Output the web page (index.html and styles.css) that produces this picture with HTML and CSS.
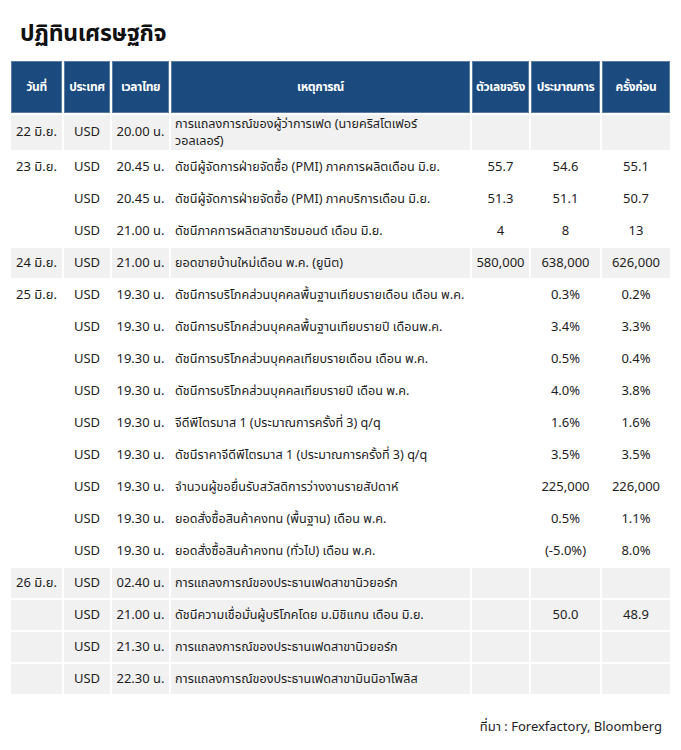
FILE: index.html
```html
<!DOCTYPE html>
<html lang="th">
<head>
<meta charset="utf-8">
<title>ปฏิทินเศรษฐกิจ</title>
<link rel="stylesheet" href="styles.css">
</head>
<body>
<div class="page">
  <h1 class="title">ปฏิทินเศรษฐกิจ</h1>
  <table class="cal">
    <colgroup>
      <col class="c-date"><col class="c-cur"><col class="c-time"><col class="c-event"><col class="c-act"><col class="c-fc"><col class="c-prev">
    </colgroup>
    <thead>
      <tr>
        <th>วันที่</th><th>ประเทศ</th><th>เวลาไทย</th><th>เหตุการณ์</th><th>ตัวเลขจริง</th><th>ประมาณการ</th><th>ครั้งก่อน</th>
      </tr>
    </thead>
    <tbody>
      <tr class="shade two">
        <td class="date">22 มิ.ย.</td><td class="cur">USD</td><td class="time">20.00 น.</td><td class="event">การแถลงการณ์ของผู้ว่าการเฟด (นายคริสโตเฟอร์<br>วอลเลอร์)</td><td class="num"></td><td class="num"></td><td class="num"></td>
      </tr>
      <tr>
        <td class="date">23 มิ.ย.</td><td class="cur">USD</td><td class="time">20.45 น.</td><td class="event">ดัชนีผู้จัดการฝ่ายจัดซื้อ (PMI) ภาคการผลิตเดือน มิ.ย.</td><td class="num">55.7</td><td class="num">54.6</td><td class="num">55.1</td>
      </tr>
      <tr>
        <td class="date"></td><td class="cur">USD</td><td class="time">20.45 น.</td><td class="event">ดัชนีผู้จัดการฝ่ายจัดซื้อ (PMI) ภาคบริการเดือน มิ.ย.</td><td class="num">51.3</td><td class="num">51.1</td><td class="num">50.7</td>
      </tr>
      <tr>
        <td class="date"></td><td class="cur">USD</td><td class="time">21.00 น.</td><td class="event">ดัชนีภาคการผลิตสาขาริชมอนด์ เดือน มิ.ย.</td><td class="num">4</td><td class="num">8</td><td class="num">13</td>
      </tr>
      <tr class="shade">
        <td class="date">24 มิ.ย.</td><td class="cur">USD</td><td class="time">21.00 น.</td><td class="event">ยอดขายบ้านใหม่เดือน พ.ค. (ยูนิต)</td><td class="num">580,000</td><td class="num">638,000</td><td class="num">626,000</td>
      </tr>
      <tr>
        <td class="date">25 มิ.ย.</td><td class="cur">USD</td><td class="time">19.30 น.</td><td class="event">ดัชนีการบริโภคส่วนบุคคลพื้นฐานเทียบรายเดือน เดือน พ.ค.</td><td class="num"></td><td class="num">0.3%</td><td class="num">0.2%</td>
      </tr>
      <tr>
        <td class="date"></td><td class="cur">USD</td><td class="time">19.30 น.</td><td class="event">ดัชนีการบริโภคส่วนบุคคลพื้นฐานเทียบรายปี เดือนพ.ค.</td><td class="num"></td><td class="num">3.4%</td><td class="num">3.3%</td>
      </tr>
      <tr>
        <td class="date"></td><td class="cur">USD</td><td class="time">19.30 น.</td><td class="event">ดัชนีการบริโภคส่วนบุคคลเทียบรายเดือน เดือน พ.ค.</td><td class="num"></td><td class="num">0.5%</td><td class="num">0.4%</td>
      </tr>
      <tr>
        <td class="date"></td><td class="cur">USD</td><td class="time">19.30 น.</td><td class="event">ดัชนีการบริโภคส่วนบุคคลเทียบรายปี เดือน พ.ค.</td><td class="num"></td><td class="num">4.0%</td><td class="num">3.8%</td>
      </tr>
      <tr>
        <td class="date"></td><td class="cur">USD</td><td class="time">19.30 น.</td><td class="event">จีดีพีไตรมาส 1 (ประมาณการครั้งที่ 3) q/q</td><td class="num"></td><td class="num">1.6%</td><td class="num">1.6%</td>
      </tr>
      <tr>
        <td class="date"></td><td class="cur">USD</td><td class="time">19.30 น.</td><td class="event">ดัชนีราคาจีดีพีไตรมาส 1 (ประมาณการครั้งที่ 3) q/q</td><td class="num"></td><td class="num">3.5%</td><td class="num">3.5%</td>
      </tr>
      <tr>
        <td class="date"></td><td class="cur">USD</td><td class="time">19.30 น.</td><td class="event">จำนวนผู้ขอยื่นรับสวัสดิการว่างงานรายสัปดาห์</td><td class="num"></td><td class="num">225,000</td><td class="num">226,000</td>
      </tr>
      <tr>
        <td class="date"></td><td class="cur">USD</td><td class="time">19.30 น.</td><td class="event">ยอดสั่งซื้อสินค้าคงทน (พื้นฐาน) เดือน พ.ค.</td><td class="num"></td><td class="num">0.5%</td><td class="num">1.1%</td>
      </tr>
      <tr>
        <td class="date"></td><td class="cur">USD</td><td class="time">19.30 น.</td><td class="event">ยอดสั่งซื้อสินค้าคงทน (ทั่วไป) เดือน พ.ค.</td><td class="num"></td><td class="num">(-5.0%)</td><td class="num">8.0%</td>
      </tr>
      <tr class="shade">
        <td class="date">26 มิ.ย.</td><td class="cur">USD</td><td class="time">02.40 น.</td><td class="event">การแถลงการณ์ของประธานเฟดสาขานิวยอร์ก</td><td class="num"></td><td class="num"></td><td class="num"></td>
      </tr>
      <tr class="shade">
        <td class="date"></td><td class="cur">USD</td><td class="time">21.00 น.</td><td class="event">ดัชนีความเชื่อมั่นผู้บริโภคโดย ม.มิชิแกน เดือน มิ.ย.</td><td class="num"></td><td class="num">50.0</td><td class="num">48.9</td>
      </tr>
      <tr class="shade">
        <td class="date"></td><td class="cur">USD</td><td class="time">21.30 น.</td><td class="event">การแถลงการณ์ของประธานเฟดสาขานิวยอร์ก</td><td class="num"></td><td class="num"></td><td class="num"></td>
      </tr>
      <tr class="shade">
        <td class="date"></td><td class="cur">USD</td><td class="time">22.30 น.</td><td class="event">การแถลงการณ์ของประธานเฟดสาขามินนิอาโพลิส</td><td class="num"></td><td class="num"></td><td class="num"></td>
      </tr>
    </tbody>
  </table>
  <p class="source">ที่มา : Forexfactory, Bloomberg</p>
</div>
</body>
</html>
```

FILE: styles.css
```css
html, body {
  margin: 0;
  padding: 0;
  background: #ffffff;
}

.page {
  width: 681px;
  padding: 0 9px;
  box-sizing: border-box;
  font-family: "Noto Sans Thai", "Noto Sans", "DejaVu Sans", sans-serif;
  color: #1e1e1e;
}

.title {
  margin: 0;
  padding: 20px 0 0 11px;
  height: 59px;
  box-sizing: border-box;
  font-size: 23px;
  line-height: 28px;
  font-weight: 700;
  color: #111111;
  letter-spacing: -0.3px;
}

.cal {
  border-collapse: separate;
  border-spacing: 2px;
  table-layout: fixed;
  width: 663px;
  font-size: 13px;
}

.c-date { width: 51px; }
.c-cur { width: 46px; }
.c-time { width: 57px; }
.c-event { width: 299px; }
.c-act { width: 57px; }
.c-fc { width: 69px; }
.c-prev { width: 68px; }

.cal th {
  background: #1b4a7e;
  color: #ffffff;
  height: 52px;
  padding: 0;
  font-weight: 700;
  font-size: 12px;
  letter-spacing: -0.4px;
  text-align: center;
  vertical-align: middle;
  white-space: nowrap;
  box-shadow: inset 0 0 0 1px #5a7ba3;
}

.cal td {
  height: 30px;
  padding: 0 3px;
  vertical-align: middle;
  line-height: 15px;
  white-space: nowrap;
  overflow: hidden;
}

.cal tr.shade td {
  background: #f1f1f1;
}

.cal tr.two td {
  height: 35px;
  line-height: 17px;
}

.date, .cur, .time, .num {
  text-align: center;
}

.cal td.event {
  text-align: left;
  font-size: 12.6px;
  padding-left: 4px;
}

.source {
  margin: 21px 10px 0 0;
  text-align: right;
  font-size: 13px;
  color: #1e1e1e;
}
```
